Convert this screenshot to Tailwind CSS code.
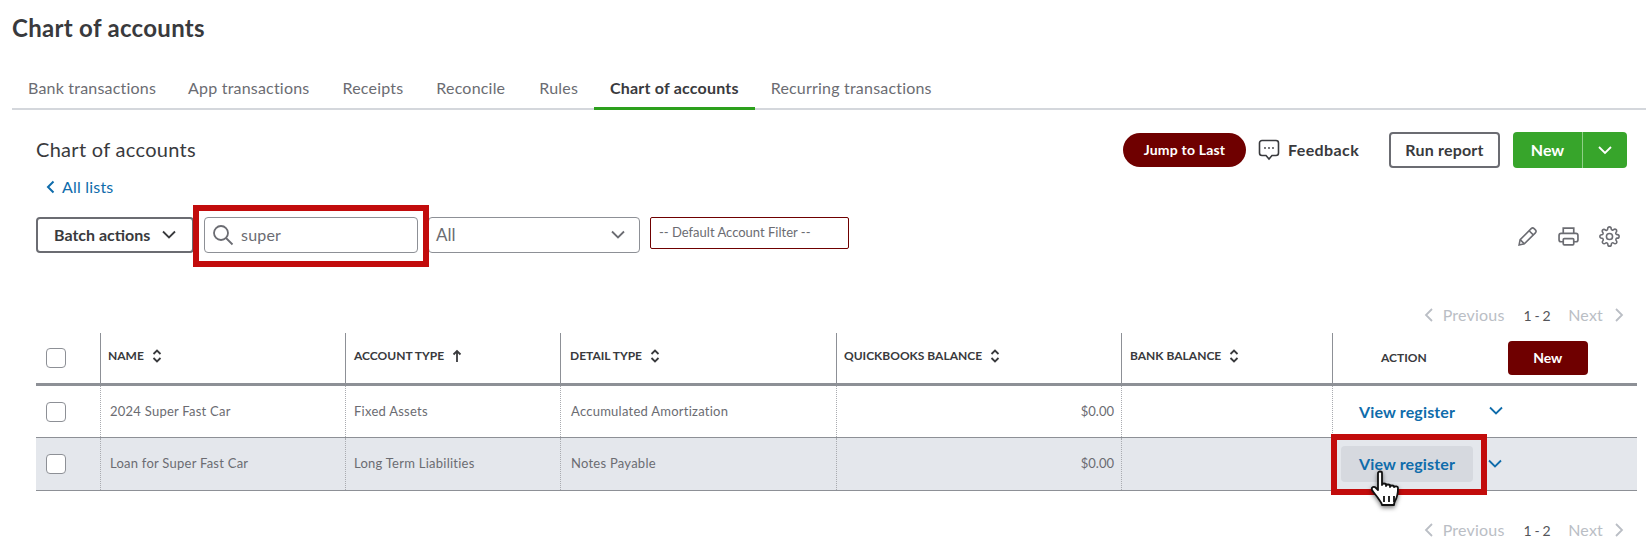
<!doctype html>
<html><head><meta charset="utf-8">
<script src="https://cdn.jsdelivr.net/npm/@tailwindcss/browser@4"></script>
</head>
<body class="bg-white font-['Lato','Noto_Sans',sans-serif] text-[#393a3d]">
<div class="relative w-[1646px] h-[554px] overflow-hidden">
  <h1 class="pl-3 pt-[12px] h-[78px] text-[24px] leading-[32px] font-bold tracking-[0.3px] text-[#393a3d]">Chart of accounts</h1>
  <nav class="ml-3 h-[30px] flex items-start border-b-2 border-[#d4d7dc] text-[16px] leading-[20px] tracking-[0.2px] text-[#6b6c72] box-content">
    <a class="px-4">Bank transactions</a>
    <a class="px-4">App transactions</a>
    <a class="ml-[1px] px-4">Receipts</a>
    <a class="ml-[1px] px-4">Reconcile</a>
    <a class="ml-[2px] px-4">Rules</a>
    <a class="h-[32px] px-4 border-b-[3px] border-[#2ca01c] font-bold tracking-[0.2px] text-[#393a3d] whitespace-nowrap">Chart of accounts</a>
    <a class="px-4">Recurring transactions</a>
  </nav>

  <div class="pl-9 pr-[19px] pt-[22px]">
    <div class="flex items-start justify-between h-[36px]">
      <div>
        <h2 class="text-[20px] leading-[34px] tracking-[0.3px] text-[#393a3d]">Chart of accounts</h2>
      </div>
      <div class="flex items-center">
        <button class="w-[123px] h-[34px] pb-[2px] rounded-full bg-[#6f0000] text-white text-[14px] tracking-[0.2px] font-bold">Jump to Last</button>
        <svg class="ml-3 w-[22px] h-[24px]" viewBox="0 0 22 24" fill="none" stroke="#393a3d" stroke-width="1.6"><path d="M4 2.500h14a2.500 2.500 0 0 1 2.500 2.500v10a2.500 2.500 0 0 1-2.500 2.500h-4L11 21l-3-3.500H4A2.500 2.500 0 0 1 1.500 15V5A2.500 2.500 0 0 1 4 2.500z"/><circle cx="7" cy="10" r=".9" fill="#393a3d" stroke="none"/><circle cx="11" cy="10" r=".9" fill="#393a3d" stroke="none"/><circle cx="15" cy="10" r=".9" fill="#393a3d" stroke="none"/></svg>
        <span class="ml-[8px] w-[101px] text-[16px] font-bold tracking-[0.4px] text-[#393a3d]">Feedback</span>
        <button class="w-[111px] h-[36px] rounded-[4px] border-2 border-[#6b6c72] text-[16px] font-bold tracking-[0.2px] text-[#393a3d]">Run report</button>
        <div class="ml-[13px] w-[114px] h-[36px] rounded-[4px] bg-[#37a52b] flex items-center text-white text-[16px] font-bold">
          <span class="w-[70px] h-full flex items-center justify-center border-r border-[#8fd088]">New</span>
          <svg class="ml-[14px] w-[16px] h-[10px]" viewBox="0 0 16 10" fill="none" stroke="#fff" stroke-width="1.8"><path d="M2 2l6 6 6-6"/></svg>
        </div>
      </div>
    </div>
    <a class="flex items-center h-[20px] mt-[9px] pl-[10px] gap-[7px] text-[16px] leading-[20px] tracking-[0.2px] text-[#0f6cab]">
      <svg class="w-[9px] h-[14px]" viewBox="0 0 9 14" fill="none" stroke="#0f6cab" stroke-width="2"><path d="M7.500 1.500L2 7l5.500 5.500"/></svg>All lists
    </a>

    <div class="flex items-start mt-[20px] h-[36px]">
      <button class="w-[158px] h-[36px] rounded-[4px] border-2 border-[#6b6c72] flex items-center pl-[16px] text-[16px] font-bold text-[#393a3d]">Batch actions
        <svg class="ml-[11px] w-[16px] h-[10px]" viewBox="0 0 16 10" fill="none" stroke="#393a3d" stroke-width="1.8"><path d="M2 1.500l6 6 6-6"/></svg>
      </button>
      <div class="ml-[10px] w-[214px] h-[36px] rounded-[4px] border border-[#8d9096] flex items-center pl-[7px] text-[16px] tracking-[0.2px] text-[#6b6c72]">
        <svg class="w-[22px] h-[22px]" viewBox="0 0 22 22" fill="none" stroke="#6b6c72" stroke-width="1.800"><circle cx="9" cy="9" r="7"/><path d="M14 14l6.500 6.500"/></svg>
        <span class="ml-[7px]">super</span>
      </div>
      <div class="ml-[10px] w-[212px] h-[36px] rounded-[4px] border border-[#8d9096] flex items-center justify-between pl-[7px] pr-[13px] text-[17px] text-[#6b6c72]">All
        <svg class="w-[16px] h-[10px]" viewBox="0 0 16 10" fill="none" stroke="#6b6c72" stroke-width="1.800"><path d="M2 1.500l6 6 6-6"/></svg>
      </div>
      <div class="ml-[10px] w-[199px] h-[32px] rounded-[2px] border border-[#6f0000] flex items-center pl-[8px] text-[13px] text-[#6b6c72]">-- Default Account Filter --</div>
      <div class="ml-auto mr-[7px] flex items-center gap-[20px] h-[38px]">
        <svg class="w-[21px] h-[21px]" viewBox="0 0 20 20" fill="none" stroke="#6b6c72" stroke-width="1.500"><path d="M2 18l1-5L13.500 2.500a2 2 0 0 1 2.800 0l1.200 1.200a2 2 0 0 1 0 2.800L7 17z"/><path d="M11.500 4.500l4 4M3 13l4 4"/></svg>
        <svg class="w-[21px] h-[21px]" viewBox="0 0 20 20" fill="none" stroke="#6b6c72" stroke-width="1.600"><path d="M5 7V2h10v5M5 15H3a2 2 0 0 1-2-2V9a2 2 0 0 1 2-2h14a2 2 0 0 1 2 2v4a2 2 0 0 1-2 2h-2"/><rect x="5" y="12" width="10" height="6" rx="1"/></svg>
        <svg class="w-[21px] h-[21px]" viewBox="0 0 24 24" fill="none" stroke="#6b6c72" stroke-width="1.800"><circle cx="12" cy="12" r="3.500"/><path d="M19.400 15a1.650 1.650 0 0 0 .33 1.820l.06.06a2 2 0 1 1-2.830 2.830l-.06-.06a1.650 1.650 0 0 0-2.800 1.170V21a2 2 0 1 1-4 0v-.09A1.650 1.650 0 0 0 7.300 19.700l-.06.06a2 2 0 1 1-2.830-2.830l.06-.06a1.650 1.650 0 0 0-1.170-2.800H3a2 2 0 1 1 0-4h.09A1.650 1.650 0 0 0 4.300 7.300l-.06-.06a2 2 0 1 1 2.830-2.830l.06.06a1.650 1.650 0 0 0 2.800-1.170V3a2 2 0 1 1 4 0v.09a1.650 1.650 0 0 0 2.800 1.170l.06-.06a2 2 0 1 1 2.830 2.830l-.06.06a1.650 1.650 0 0 0 1.170 2.800H21a2 2 0 1 1 0 4h-.09a1.650 1.650 0 0 0-1.510 1z"/></svg>
      </div>
    </div>

    <div class="mt-[52px] h-[20px] flex items-center justify-end pr-[3px] text-[16px] tracking-[0.2px] text-[#babec5]">
      <svg class="w-[10px] h-[14px]" viewBox="0 0 10 14" fill="none" stroke="#babec5" stroke-width="1.800"><path d="M8 1L2 7l6 6"/></svg>
      <span class="ml-[9px]">Previous</span><span class="ml-[19px] text-[14px] tracking-[-0.4px] font-normal text-[#54555a]">1 - 2</span><span class="ml-[18px]">Next</span>
      <svg class="ml-[11px] w-[10px] h-[14px]" viewBox="0 0 10 14" fill="none" stroke="#babec5" stroke-width="1.800"><path d="M2 1l6 6-6 6"/></svg>
    </div>

    <div class="mt-[8px] w-[1601px]">
      <div class="flex h-[53px] border-b-[3px] border-[#8d9096] text-[12px] font-bold text-[#393a3d] items-stretch">
        <div class="w-[64px] flex items-center pl-[10px]"><span class="w-[20px] h-[20px] rounded-[4px] border border-[#8d9096] bg-white"></span></div>
        <div class="w-[245px] flex items-center gap-[8px] pl-[7px] border-l border-[#8d9096] pb-[4px]">NAME <svg class="w-[10px] h-[14px]" viewBox="0 0 10 14" fill="none" stroke="#393a3d" stroke-width="1.800"><path d="M1.500 5L5 1.500 8.500 5M1.500 9L5 12.500 8.500 9"/></svg></div>
        <div class="w-[215px] flex items-center gap-[8px] pl-[8px] border-l border-[#8d9096] pb-[4px]">ACCOUNT TYPE <svg class="w-[10px] h-[14px]" viewBox="0 0 10 14" fill="none" stroke="#393a3d" stroke-width="1.800"><path d="M5 13V2M1.500 5.500L5 2l3.500 3.500"/></svg></div>
        <div class="w-[276px] flex items-center gap-[8px] pl-[9px] border-l border-[#8d9096] pb-[4px]">DETAIL TYPE <svg class="w-[10px] h-[14px]" viewBox="0 0 10 14" fill="none" stroke="#393a3d" stroke-width="1.800"><path d="M1.500 5L5 1.500 8.500 5M1.500 9L5 12.500 8.500 9"/></svg></div>
        <div class="w-[285px] flex items-center gap-[8px] pl-[7px] border-l border-[#8d9096] pb-[4px]">QUICKBOOKS BALANCE <svg class="w-[10px] h-[14px]" viewBox="0 0 10 14" fill="none" stroke="#393a3d" stroke-width="1.800"><path d="M1.500 5L5 1.500 8.500 5M1.500 9L5 12.500 8.500 9"/></svg></div>
        <div class="w-[211px] flex items-center gap-[8px] pl-[8px] border-l border-[#8d9096] pb-[4px]">BANK BALANCE <svg class="w-[10px] h-[14px]" viewBox="0 0 10 14" fill="none" stroke="#393a3d" stroke-width="1.800"><path d="M1.500 5L5 1.500 8.500 5M1.500 9L5 12.500 8.500 9"/></svg></div>
        <div class="flex-1 flex items-center border-l border-[#8d9096]">
          <span class="ml-[48px] font-bold">ACTION</span>
          <button class="ml-[81px] w-[80px] h-[34px] pb-[2px] rounded-[4px] bg-[#6f0000] text-white text-[14px] font-bold">New</button>
        </div>
      </div>

      <div class="flex h-[52px] border-b border-[#8d9096] text-[13px] tracking-[0.25px] text-[#6b6c72] items-stretch">
        <div class="w-[64px] flex items-center pl-[10px]"><span class="w-[20px] h-[20px] rounded-[4px] border border-[#8d9096] bg-white"></span></div>
        <div class="w-[245px] flex items-center pl-[9px] border-l border-dotted border-[#a9abb0]">2024 Super Fast Car</div>
        <div class="w-[215px] flex items-center pl-[8px] border-l border-dotted border-[#a9abb0]">Fixed Assets</div>
        <div class="w-[276px] flex items-center pl-[10px] border-l border-dotted border-[#a9abb0]">Accumulated Amortization</div>
        <div class="w-[285px] flex items-center justify-end pr-[7px] tracking-normal border-l border-dotted border-[#a9abb0]">$0.00</div>
        <div class="w-[211px] border-l border-dotted border-[#a9abb0]"></div>
        <div class="flex-1 flex items-center border-l border-dotted border-[#a9abb0]">
          <span class="ml-[26px] text-[16px] tracking-[0.15px] font-bold text-[#0f6cab]">View register</span>
          <svg class="ml-[33px] w-[16px] h-[10px] -mt-[1px]" viewBox="0 0 16 10" fill="none" stroke="#0f6cab" stroke-width="1.800"><path d="M2 1.500l6 6 6-6"/></svg>
        </div>
      </div>

      <div class="flex h-[53px] border-b border-[#8d9096] bg-[#e4e7ec] text-[13px] tracking-[0.25px] text-[#6b6c72] items-stretch">
        <div class="w-[64px] flex items-center pl-[10px]"><span class="w-[20px] h-[20px] rounded-[4px] border border-[#8d9096] bg-white"></span></div>
        <div class="w-[245px] flex items-center pl-[9px] border-l border-dotted border-[#a9abb0]">Loan for Super Fast Car</div>
        <div class="w-[215px] flex items-center pl-[8px] border-l border-dotted border-[#a9abb0]">Long Term Liabilities</div>
        <div class="w-[276px] flex items-center pl-[10px] border-l border-dotted border-[#a9abb0]">Notes Payable</div>
        <div class="w-[285px] flex items-center justify-end pr-[7px] tracking-normal border-l border-dotted border-[#a9abb0]">$0.00</div>
        <div class="w-[211px] border-l border-dotted border-[#a9abb0]"></div>
        <div class="flex-1 flex items-center border-l border-dotted border-[#a9abb0]">
          <span class="ml-[8px] w-[132px] h-[36px] rounded-[4px] bg-[#d6d9df] flex items-center justify-center text-[16px] font-bold tracking-[0.15px] text-[#0f6cab]">View register</span>
          <svg class="ml-[14px] w-[16px] h-[10px] -mt-[1px]" viewBox="0 0 16 10" fill="none" stroke="#0f6cab" stroke-width="1.800"><path d="M2 1.500l6 6 6-6"/></svg>
        </div>
      </div>
    </div>

    <div class="mt-[29px] h-[20px] flex items-center justify-end pr-[3px] text-[16px] tracking-[0.2px] text-[#babec5]">
      <svg class="w-[10px] h-[14px]" viewBox="0 0 10 14" fill="none" stroke="#babec5" stroke-width="1.800"><path d="M8 1L2 7l6 6"/></svg>
      <span class="ml-[9px]">Previous</span><span class="ml-[19px] text-[14px] tracking-[-0.4px] font-normal text-[#54555a]">1 - 2</span><span class="ml-[18px]">Next</span>
      <svg class="ml-[11px] w-[10px] h-[14px]" viewBox="0 0 10 14" fill="none" stroke="#babec5" stroke-width="1.800"><path d="M2 1l6 6-6 6"/></svg>
    </div>
  </div>

  <div class="absolute left-[193px] top-[205px] w-[236px] h-[62px] border-[6px] border-[#c20c0c]"></div>
  <div class="absolute left-[1331px] top-[434px] w-[156px] h-[61px] border-[6px] border-[#c20c0c]"></div>
  <svg class="absolute left-[1370px] top-[470px] w-[34px] h-[38px] drop-shadow-[0_2px_2px_rgba(0,0,0,0.5)]" viewBox="0 0 34 38" fill="#fff" stroke="#111" stroke-width="1.800" stroke-linejoin="round"><path d="M8 3c0-2 4-2 4 0v12c0-2 4-2 4 0v1c0-2 4-2 4 0v1c0-2 4-2 4 0 1-1 4-1 4 1 0 5 0 8-3 13-1 2-1 3-1 4H12c0-2-2-4-4-7-2-3-5-6-6-8-1-3 2-4 4-2l2 2z"/><path d="M14 26v6M19 26v6M24 26v6" fill="none"/></svg>
</div>
</body></html>
